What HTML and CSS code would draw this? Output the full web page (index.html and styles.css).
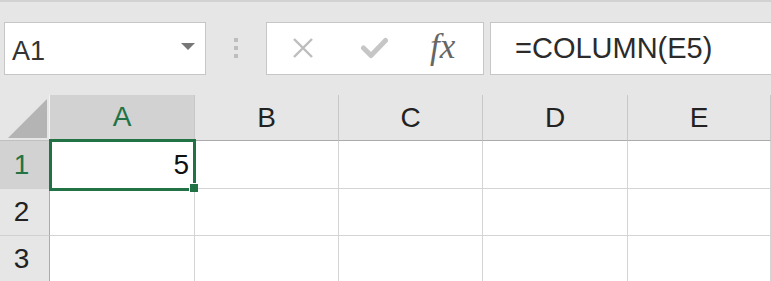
FILE: index.html
```html
<!DOCTYPE html>
<html lang="en">
<head>
  <meta charset="UTF-8" />
  <title>Sheet - COLUMN</title>
  <link rel="stylesheet" href="styles.css">
</head>
<body>
  <div class="topline"></div>

  <div class="toolbar">
    <div class="namebox">
      <span class="name">A1</span>
      <span class="arrow"></span>
    </div>
    <div class="grip">
      <span></span><span></span><span></span>
    </div>
    <div class="buttons">
      <svg class="icon cancel" width="22" height="22" viewBox="0 0 22 22">
        <path d="M2 2 L20 20 M20 2 L2 20" stroke="#bdbdbd" stroke-width="2.4" fill="none"/>
      </svg>
      <svg class="icon enter" width="27" height="22" viewBox="0 0 27 22">
        <path d="M2.5 11 L10 18.5 L24.5 3.5" stroke="#c6c6c6" stroke-width="5" stroke-linecap="round" stroke-linejoin="round" fill="none"/>
      </svg>
      <span class="fx">fx</span>
    </div>
    <div class="formula">=COLUMN(E5)</div>
  </div>

  <div class="sheet">
    <div class="corner">
      <svg width="40" height="40" viewBox="0 0 40 40">
        <polygon points="0,39 39,0 39,39" fill="#b4b4b4"/>
      </svg>
    </div>
    <div class="colhead active">A</div>
    <div class="colhead">B</div>
    <div class="colhead">C</div>
    <div class="colhead">D</div>
    <div class="colhead">E</div>

    <div class="rowhead active">1</div>
    <div class="cell num">5</div>
    <div class="cell"></div>
    <div class="cell"></div>
    <div class="cell"></div>
    <div class="cell"></div>

    <div class="rowhead">2</div>
    <div class="cell"></div>
    <div class="cell"></div>
    <div class="cell"></div>
    <div class="cell"></div>
    <div class="cell"></div>

    <div class="rowhead">3</div>
    <div class="cell"></div>
    <div class="cell"></div>
    <div class="cell"></div>
    <div class="cell"></div>
    <div class="cell"></div>

    <div class="selection"></div>
    <div class="handle"></div>
  </div>
</body>
</html>
```

FILE: styles.css
```css
body {
  margin: 0;
  width: 771px;
  height: 281px;
  overflow: hidden;
  background-color: #e6e6e6;
  font-family: 'Liberation Sans', Arial, sans-serif;
  color: #222;
}
.topline {
  height: 2px;
  background-color: #d2d2d2;
}
.toolbar {
  display: flex;
  align-items: flex-start;
  height: 93px;
  padding-top: 20px;
  box-sizing: border-box;
}
.namebox {
  box-sizing: border-box;
  width: 202px;
  height: 53px;
  margin-left: 4px;
  background: #fff;
  border: 1px solid #c6c6c6;
  display: flex;
  align-items: center;
  justify-content: space-between;
  padding: 5px 10px 0 7px;
}
.name {
  font-size: 27px;
  color: #333;
}
.arrow {
  width: 0;
  height: 0;
  border-left: 7px solid transparent;
  border-right: 7px solid transparent;
  border-top: 7px solid #777;
  margin-top: -10px;
}
.grip {
  display: flex;
  flex-direction: column;
  gap: 4px;
  margin: 16px 28px 0 28px;
}
.grip span {
  display: block;
  width: 4px;
  height: 4px;
  background: #bdbdbd;
}
.buttons {
  box-sizing: border-box;
  width: 218px;
  height: 53px;
  background: #fff;
  border: 1px solid #c6c6c6;
  display: flex;
  align-items: center;
}
.cancel {
  margin-left: 25px;
  margin-top: -2px;
}
.enter {
  margin-left: 47px;
  margin-top: -2px;
}
.fx {
  margin-left: 42px;
  font-family: 'Liberation Serif', 'Times New Roman', serif;
  font-style: italic;
  font-size: 35px;
  color: #666;
  margin-top: -4px;
}
.formula {
  box-sizing: border-box;
  flex: 1;
  height: 53px;
  margin-left: 6px;
  margin-right: -2px;
  background: #fff;
  border: 1px solid #c6c6c6;
  font-size: 29px;
  padding-left: 24px;
  line-height: 50px;
  color: #2b2b2b;
}
.sheet {
  position: relative;
  display: grid;
  grid-template-columns: 50px 145px 144px 144px 145px 143px;
  grid-template-rows: 46px 48px 47px 46px;
}
.corner {
  background: #e6e6e6;
  border-right: 1px solid #f2f2f2;
  border-bottom: 1px solid #c0c0c0;
  box-sizing: border-box;
  padding: 4px 0 0 8px;
}
.corner svg {
  display: block;
}
.colhead {
  box-sizing: border-box;
  border-right: 1px solid #c8c8c8;
  border-bottom: 1px solid #ababab;
  display: flex;
  align-items: center;
  justify-content: center;
  font-size: 28px;
  color: #222;
}
.colhead.active {
  background: #d2d2d2;
  color: #217346;
  border-bottom: 2px solid #217346;
}
.rowhead {
  box-sizing: border-box;
  border-right: 1px solid #ababab;
  border-bottom: 1px solid #d0d0d0;
  display: flex;
  align-items: center;
  justify-content: center;
  padding-right: 6px;
  font-size: 28px;
  color: #222;
}
.rowhead.active {
  background: #d2d2d2;
  color: #217346;
}
.cell {
  box-sizing: border-box;
  background: #fff;
  border-right: 1px solid #d4d4d4;
  border-bottom: 1px solid #d4d4d4;
}
.cell.num {
  display: flex;
  align-items: center;
  justify-content: flex-end;
  padding-right: 5px;
  font-size: 28px;
  color: #111;
}
.selection {
  position: absolute;
  left: 49px;
  top: 44px;
  width: 147px;
  height: 52px;
  box-sizing: border-box;
  border: 3px solid #217346;
}
.handle {
  position: absolute;
  left: 189px;
  top: 88px;
  width: 8px;
  height: 8px;
  background: #217346;
  border-left: 1px solid #fff;
  border-top: 1px solid #fff;
}
```
